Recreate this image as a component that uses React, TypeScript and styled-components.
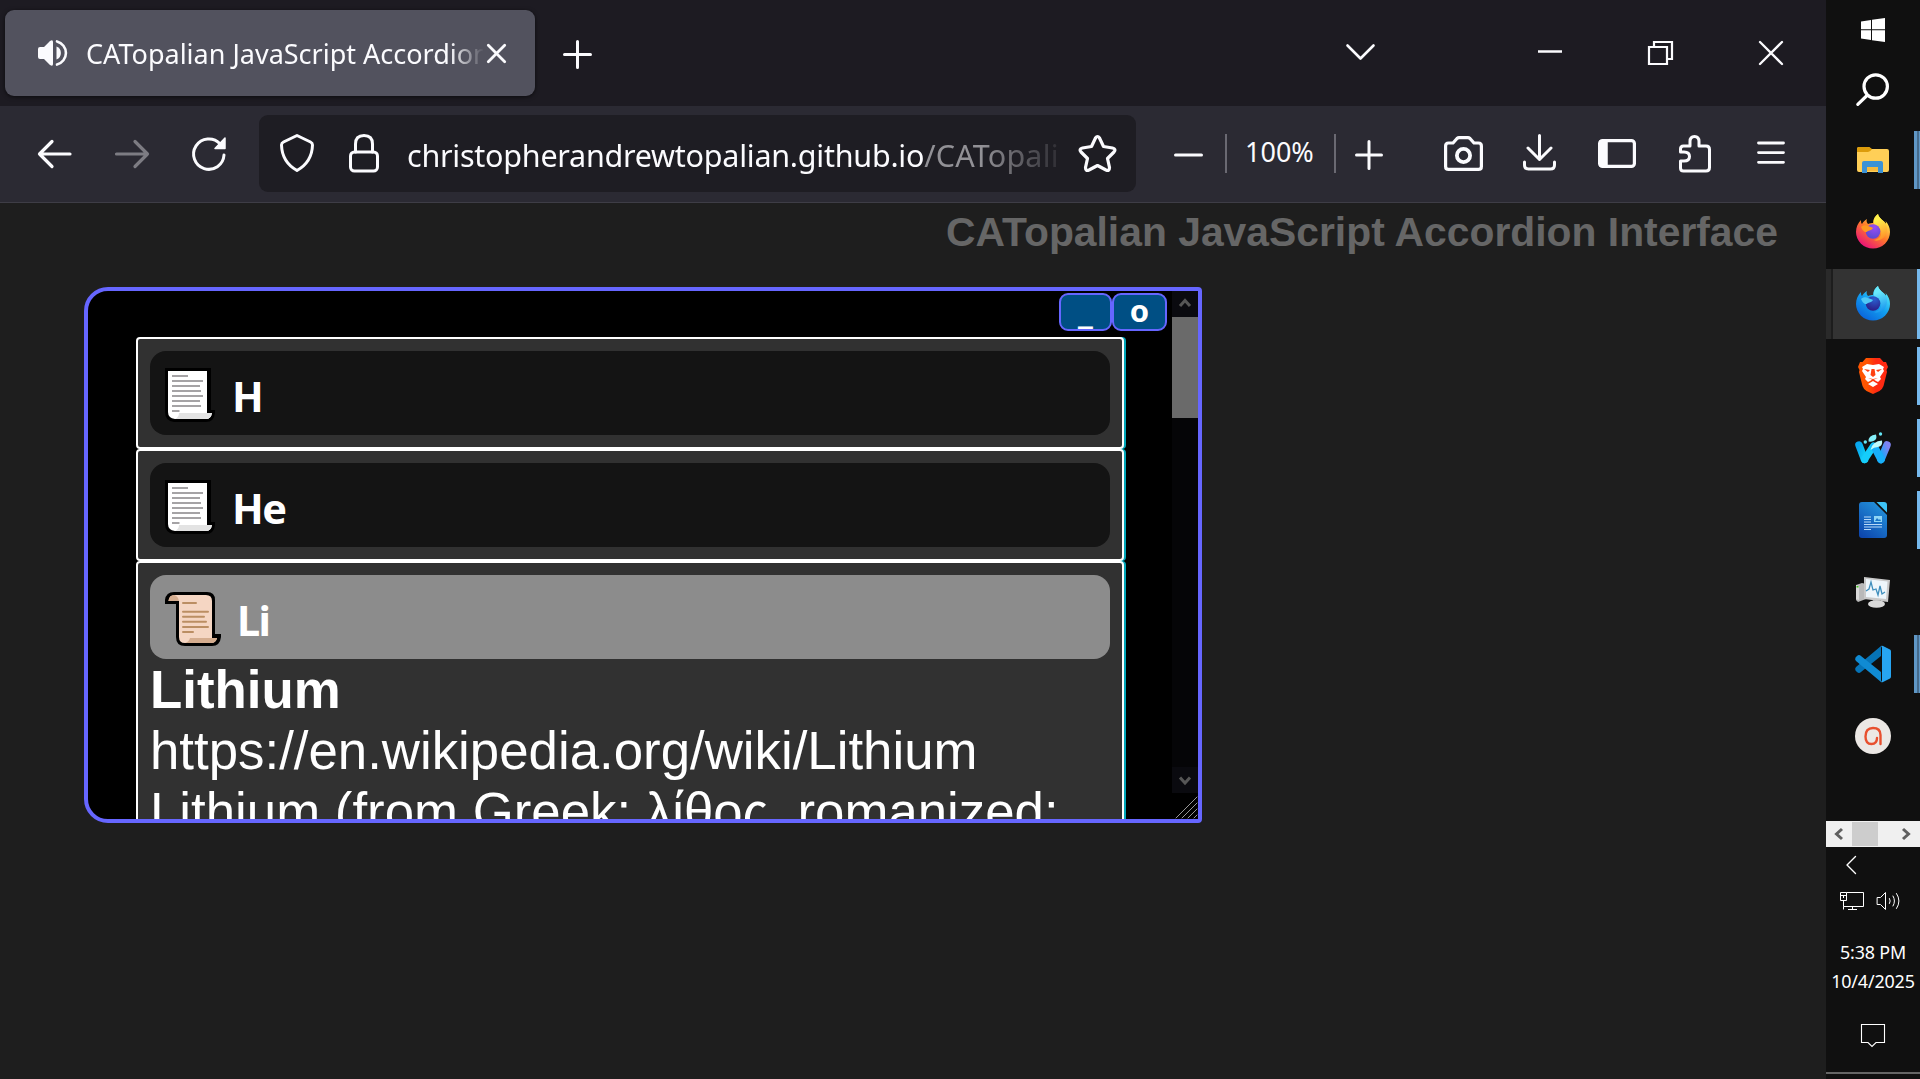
import React from "react";
import styled, { createGlobalStyle } from "styled-components";

const UI_FONT = `"Noto Sans", "Open Sans", sans-serif`;
const PAGE_FONT = `"Liberation Sans", Arial, sans-serif`;

const GlobalStyle = createGlobalStyle`
  * { box-sizing: border-box; }
  html, body { margin: 0; background: #1e1e1e; overflow: hidden; }
  svg { display: block; flex: none; overflow: visible; }
`;

const Desktop = styled.div`
  display: flex;
  width: 1920px;
  height: 1079px;
  overflow: hidden;
  background: #111;
`;

const BrowserWindow = styled.main`
  display: flex;
  flex-direction: column;
  width: 1826px;
  flex: none;
  background: #1e1e1e;
`;

const TabStrip = styled.header`
  display: flex;
  height: 106px;
  flex: none;
  padding: 10px 43px 10px 5px;
  background: #1d1b22;
  color: #fbfbfe;
`;

const Tab = styled.div`
  display: flex;
  align-items: center;
  width: 530px;
  height: 86px;
  padding-left: 33px;
  border-radius: 9px;
  background: #52525e;
  box-shadow: 0 1px 4px rgba(0, 0, 0, 0.6);
`;

const TabLabel = styled.span`
  width: 397px;
  margin-left: 19px;
  padding-top: 2px;
  overflow: hidden;
  white-space: nowrap;
  font: 400 27px/36px ${UI_FONT};
  letter-spacing: 0;
  mask-image: linear-gradient(to right, #000 364px, transparent 398px);
`;

const Slot = styled.span<{ $gap?: number; $drop?: number }>`
  display: flex;
  flex: none;
  margin-left: ${(p) => p.$gap ?? 0}px;
  margin-top: ${(p) => p.$drop ?? 0}px;
`;

const Spacer = styled.span`
  flex: 1;
`;

const Toolbar = styled.nav`
  display: flex;
  height: 97px;
  flex: none;
  padding: 9px 41px 10px 38px;
  border-bottom: 1px solid #3e3d46;
  background: #2b2a33;
  color: #fbfbfe;
`;

const AddressBar = styled.div`
  display: flex;
  width: 877px;
  height: 77px;
  margin-left: 33px;
  padding-left: 21px;
  border-radius: 9px;
  background: #1e1d23;
`;

const Address = styled.span`
  width: 657px;
  margin: 19px 0 0 28px;
  overflow: hidden;
  white-space: nowrap;
  font: 400 30.5px/42px ${UI_FONT};
  letter-spacing: -0.25px;
  mask-image: linear-gradient(to right, #000 575px, transparent 665px);
`;

const AddressPath = styled.span`
  color: #929196;
  letter-spacing: 0.2px;
`;

const Divider = styled.span<{ $gap: number }>`
  width: 2px;
  height: 39px;
  margin: 19px 0 0 ${(p) => p.$gap}px;
  background: #6a6972;
`;

const ZoomLevel = styled.span`
  width: 68px;
  margin: 19px 0 0 18px;
  white-space: nowrap;
  font: 400 27px/36px ${UI_FONT};
  letter-spacing: 0;
`;

const Page = styled.section`
  display: flex;
  flex-direction: column;
  flex: 1;
`;

const PageTitle = styled.h1`
  height: 84px;
  margin: 0;
  padding: 5px 48px 0 0;
  text-align: right;
  white-space: nowrap;
  color: #666;
  font: 700 40.85px/48px ${PAGE_FONT};
`;

const Panel = styled.div`
  display: flex;
  width: 1118px;
  height: 536px;
  margin-left: 84px;
  border: 4px solid #6666ff;
  border-radius: 24px 4px 4px 24px;
  background: #000;
  overflow: hidden;
`;

const PanelBody = styled.div`
  display: flex;
  flex-direction: column;
  width: 1084px;
  height: 528px;
  overflow: hidden;
`;

const PanelControls = styled.div`
  display: flex;
  flex: none;
  justify-content: flex-end;
  height: 46px;
  padding: 2px 5px 6px 0;
`;

const PanelButton = styled.button<{ $width: number; $size: number }>`
  width: ${(p) => p.$width}px;
  height: 38px;
  padding: 0 0 5px;
  border: 2px solid #6666ff;
  border-radius: 9px;
  background: #004f84;
  color: #fff;
  font: 700 ${(p) => p.$size}px/30px ${UI_FONT};
`;

const Accordion = styled.div`
  display: flex;
  flex-direction: column;
  flex: none;
  width: 988px;
  margin-left: 48px;
`;

const Entry = styled.article`
  padding: 12px;
  border: 2px solid #fff;
  border-radius: 4px;
  background: #313131;
  box-shadow: 2px 0 0 #00a5b8;
`;

const EntryHeader = styled.div<{ $open?: boolean }>`
  display: flex;
  height: 84px;
  padding: 17px 0 0 15px;
  border-radius: 16px;
  background: ${(p) => (p.$open ? "#8c8c8c" : "#141414")};
`;

const EntryLabel = styled.span<{ $gap: number }>`
  margin: 0 0 0 ${(p) => p.$gap}px;
  color: #fff;
  font: 700 41.5px/57px ${UI_FONT};
  letter-spacing: -1.6px;
`;

const EntryText = styled.div`
  color: #fff;
  white-space: nowrap;
  font: 400 52.8px/61px ${PAGE_FONT};
`;

const EntryTitle = styled.strong`
  display: block;
  font-weight: 700;
`;

const EntryLine = styled.span`
  display: block;
`;

const ScrollRail = styled.div`
  display: flex;
  flex-direction: column;
  width: 26px;
  background: #050507;
`;

const ScrollButton = styled.div<{ $lift?: number }>`
  display: flex;
  align-items: center;
  justify-content: center;
  height: 26px;
  padding-bottom: ${(p) => p.$lift ?? 0}px;
  background: #0a0a0f;
`;

const ScrollThumb = styled.div`
  height: 101px;
  margin-bottom: auto;
  background: #6a6a6a;
`;

const ResizeCorner = styled.div`
  height: 26px;
  background: #000;
`;

const Taskbar = styled.aside`
  display: flex;
  flex-direction: column;
  width: 94px;
  height: 1079px;
  background: #101010;
  color: #fff;
`;

const SystemButton = styled.div<{ $height: number; $top: number; $left: number }>`
  height: ${(p) => p.$height}px;
  padding: ${(p) => p.$top}px 0 0 ${(p) => p.$left}px;
`;

const AppButton = styled.div<{ $active?: boolean }>`
  display: flex;
  align-items: center;
  height: 70px;
  margin-bottom: 2px;
  padding-left: ${(p) => (p.$active ? 0 : 29)}px;
  background: ${(p) => (p.$active ? "#333" : "transparent")};
`;

const ActiveSeam = styled.span`
  align-self: stretch;
  width: 7px;
  margin-right: 22px;
  border-right: 2px solid #1d1d1d;
  background: #2a2a2a;
`;

const Indicator = styled.span<{ $full?: boolean; $stacked?: boolean }>`
  width: ${(p) => (p.$stacked ? 6 : 3)}px;
  height: ${(p) => (p.$full ? 70 : 58)}px;
  margin-left: auto;
  background: ${(p) =>
    p.$stacked
      ? "linear-gradient(to right, #5f97c6 3px, #456a8b 3px 5px, #5f97c6 5px)"
      : "#76b9ed"};
`;

const TaskScroll = styled.div`
  display: flex;
  align-items: center;
  height: 26px;
  margin-top: 48px;
  padding-left: 8px;
  background: #f0f0f0;
  color: #606060;
`;

const TaskScrollThumb = styled.span`
  width: 26px;
  height: 24px;
  margin: 0 24px 0 9px;
  background: #cdcdcd;
`;

const TrayRow = styled.div`
  display: flex;
  height: 18px;
  margin-top: 18px;
  padding-left: 14px;
  gap: 13px;
`;

const Clock = styled.div`
  display: flex;
  flex-direction: column;
  align-items: center;
  margin-top: 28px;
  white-space: nowrap;
  font: 400 17.9px/29px ${UI_FONT};
  letter-spacing: -0.15px;
`;

const TaskbarEdge = styled.div`
  height: 2px;
  margin-top: 24px;
  background: #666;
`;

type DrawProps = {
  w: number;
  h: number;
  weight?: number;
  color?: string;
  children: React.ReactNode;
};

const Draw = ({ w, h, weight = 3, color = "currentColor", children }: DrawProps) => (
  <svg
    width={w}
    height={h}
    viewBox={`0 0 ${w} ${h}`}
    fill="none"
    stroke={color}
    strokeWidth={weight}
    strokeLinecap="round"
    strokeLinejoin="round"
  >
    {children}
  </svg>
);

const SpeakerIcon = () => (
  <Draw w={29} h={26} weight={2.6}>
    <path d="M0 9q0-2 2-2h4l6-6q3-2 3 1v22q0 3-3 1l-6-6H2q-2 0-2-2z" fill="currentColor" stroke="none" />
    <path d="M19 1.4a12 12 0 0 1 0 23.2" />
    <path d="M18.5 6.5a7 7 0 0 1 0 13z" fill="currentColor" stroke="none" />
  </Draw>
);

const PageIcon = () => (
  <svg width="50" height="54" viewBox="0 0 50 54">
    <path d="M0 0H46V42H50V45Q49 54 41 54H9Q0 53 0 44Z" fill="#000" />
    <path d="M3 3H42V45H47Q46 51 41 51H10Q3 50 3 44Z" fill="#fff" />
    <path d="M14 45H47Q46 51 41 51H10Q14 49 14 45Z" fill="#e3e3e3" />
    <path
      d="M7 8H23M7 13H38M7 18H35M7 23H36M7 28H38M7 33H35M7 38H36M7 43H14.500"
      stroke="#a5a3a5"
      strokeWidth="2"
    />
  </svg>
);

const ParchmentIcon = () => (
  <svg width="56" height="54" viewBox="0 0 56 54" strokeLinecap="round">
    <path d="M0 12V8Q1 0 9 0H42Q50 0 50 8V42H56V45Q55 54 47 54H20Q11 54 11 45V12Z" fill="#000" />
    <path d="M3.500 9Q4 3 10 3H41Q47 3 47 9V46H52Q51 51 46 51H20Q14 51 14 45V9Z" fill="#f5d6c3" />
    <path d="M3.500 9Q4 3 9 3Q13 4 14 9Z" fill="#d5ad8f" />
    <path d="M25 46H52Q51 51 46 51H20Q24 50 25 46Z" fill="#d5ad8f" />
    <path
      d="M18 11H31M18 19.700H43M18 24.700H39M18 29.700H41M18 35H43M18 40H28"
      stroke="#bb8e63"
      strokeWidth="2"
    />
  </svg>
);

type FoxProps = { id: string; body: string[]; tail: string[]; globe: string[]; head: string };

const FoxIcon = ({ id, body, tail, globe, head }: FoxProps) => (
  <svg width="36" height="36" viewBox="0 1 36 36">
    <defs>
      <linearGradient id={`${id}-body`} x1="0.85" y1="0.1" x2="0.25" y2="0.95">
        <stop offset="0.1" stopColor={body[0]} />
        <stop offset="0.5" stopColor={body[1]} />
        <stop offset="1" stopColor={body[2]} />
      </linearGradient>
      <linearGradient id={`${id}-tail`} x1="0.4" y1="0" x2="0.6" y2="1">
        <stop offset="0.2" stopColor={tail[0]} />
        <stop offset="1" stopColor={tail[1]} />
      </linearGradient>
      <radialGradient id={`${id}-globe`} cx="0.6" cy="0.2" r="0.8">
        <stop offset="0" stopColor={globe[0]} />
        <stop offset="1" stopColor={globe[1]} />
      </radialGradient>
    </defs>
    <path
      d="M23 1c1 5 6 6 8 10 0-1 0-2-.5-3 3 3 4.500 7 4.500 11a17 16.500 0 0 1-34 0c0-5 2-9 5-12 0 2 0 3 1 4 1-2 3-4 5-5-1 2 0 4 1 5 2-1 4-1 5-1 0-4 2-7 5-9z"
      fill={`url(#${id}-body)`}
    />
    <path
      d="M23 1c1 5 6 6 8 10 2 5 1 12-4 15-4 2-6 2-8 1 6-1 8-5 7-9-1-3-3-4-5-5-4-3-2-9 2-12z"
      fill={`url(#${id}-tail)`}
    />
    <circle cx="18" cy="18.500" r="7.300" fill={`url(#${id}-globe)`} />
    <path d="M6 14c2-2 5-2 7-1 2 1 4 1 5 2-1 2-3 2-5 3-1 1-2 1-3 1-2-1-3-3-4-5z" fill={head} />
  </svg>
);

const ExplorerIcon = () => (
  <svg width="36" height="36" viewBox="0 1 36 36">
    <path d="M2 8q0-2 2-2h9q2 0 3 2h16q2 0 2 2v19q0 2-2 2H4q-2 0-2-2z" fill="#ffcf57" />
    <path d="M2 8q0-2 2-2h9q2 0 4 2-2 3-4 3H2z" fill="#dc9c0b" />
    <path d="M7 32V22q0-2 2-2h17q2 0 2 2v10h-5v-6H12v6z" fill="#3b92d6" />
    <path d="M12 26h11v4H12z" fill="#f5b93d" />
  </svg>
);

const BraveIcon = () => (
  <svg width="36" height="36" viewBox="0 0 36 36">
    <defs>
      <linearGradient id="brave-shield" x1="0" x2="1">
        <stop offset="0.3" stopColor="#ff5500" />
        <stop offset="0.6" stopColor="#ff2a12" />
      </linearGradient>
    </defs>
    <path d="M11 0h14l3.500 4 2.500 0 2 5-1.500 3 .5 2-3.500 14q-1 3-4 5L18 36l-6.500-3q-3-2-4-5L4 14l.5-2L3 9l2-5h2.500z" fill="url(#brave-shield)" />
    <path
      d="M12 6l6 1 6-1 5 3-1 2 1 2-4 6 1 2-3 3-2-1-3-2-3 2-2 1-3-3 1-2-4-6 1-2-1-2zM13 26l5-3 5 3-5 3z"
      fill="#fff"
    />
    <path d="M9 11l6 1-2 2zM27 11l-6 1 2 2zM16.500 11h3l1 6-2.500 2-2.500-2zM13 20l5 2 5-2-5 1z" fill="#ff4010" />
  </svg>
);

const WaterfoxIcon = () => (
  <svg width="36" height="36" viewBox="0 0 36 36" fill="none" strokeLinecap="round">
    <defs>
      <linearGradient id="wave-a" x1="0" y1="0" x2="1" y2="1">
        <stop offset="0" stopColor="#08a7ee" />
        <stop offset="1" stopColor="#12d5f7" />
      </linearGradient>
      <linearGradient id="wave-b" x1="0" y1="1" x2="1" y2="0">
        <stop offset="0.2" stopColor="#16a8fb" />
        <stop offset="1" stopColor="#7f82f0" />
      </linearGradient>
    </defs>
    <path d="M26 29.500L32 15" stroke="url(#wave-b)" strokeWidth="7.500" />
    <path d="M4 15L9.500 29.500" stroke="url(#wave-a)" strokeWidth="7.500" />
    <path d="M9.500 29.500L18.500 16" stroke="#15cdfb" strokeWidth="7" />
    <path d="M19.500 17L26 29.500" stroke="#18b0fb" strokeWidth="7.500" />
    <path d="M15.500 20q2-9 11.500-9.500 1 5.500-4 6.500-4 0-7.500 3z" fill="#c1fbfb" />
    <path d="M13.500 11.500q-.5-6 7.500-7 1.500 5-2.500 6.500-2.500 1-5 .5z" fill="#85eff8" />
    <circle cx="25.500" cy="4" r="1.700" fill="#64e5f4" />
    <circle cx="10.300" cy="12" r="1.700" fill="#64e5f4" />
  </svg>
);

const WriterIcon = () => (
  <svg width="36" height="36" viewBox="0 0 36 36">
    <defs>
      <linearGradient id="writer-page" x1="0.8" y1="0" x2="0.2" y2="1">
        <stop offset="0" stopColor="#2496dd" />
        <stop offset="1" stopColor="#0d47ae" />
      </linearGradient>
    </defs>
    <path d="M7 0h12l13 13v20q0 3-3 3H7q-3 0-3-3V3q0-3 3-3z" fill="url(#writer-page)" />
    <path d="M21.500 0h7.500q3 0 3 3v7.500z" fill="#3dc3f7" />
    <path d="M9 15h7M9 17.500h7M9 20h7M9 22.500h18M9 25h18M9 27.500h7" stroke="#b8d9f8" strokeWidth="1.200" />
    <rect x="19" y="14" width="8" height="6" fill="#8fd6f5" />
    <path d="M20 19l2-3 2 2 1-1 1 2z" fill="#1a74c8" />
  </svg>
);

const MonitorIcon = () => (
  <svg width="36" height="36" viewBox="0 -1 36 36">
    <path d="M1 10l6-2 4 1v15l-8 3-2-2z" fill="#b9b9b9" />
    <path d="M1 10l3 1v14l-3-1z" fill="#d8d8d8" />
    <rect x="1.500" y="11" width="2" height="1.500" fill="#3fc21e" />
    <path d="M9 2l26 3-2 22-24-3z" fill="#c9c9c9" />
    <path d="M11 4l21.500 2.500-1.500 17.500-20-2z" fill="#eef6fb" />
    <path d="M11 16l3-2 2-7 2 8 3-1 2 6 2-9 2 8 3-2" fill="none" stroke="#3f8fbd" strokeWidth="1.300" />
    <path d="M18 25h8v3h-8z" fill="#999" />
    <ellipse cx="21.500" cy="29" rx="8.500" ry="3.800" fill="#dadada" />
  </svg>
);

const CodeIcon = () => (
  <svg width="36" height="36" viewBox="0 0 36 36">
    <path d="M27 9.500v17L16.500 18z" fill="#101010" />
    <path d="M26 0v10L6 26q-2 2-4 0l-1.500-1.500q-1-2 .5-3.500z" fill="#0673b6" />
    <path d="M26 36V26L6 10q-2-2-4 0L.5 11.500q-1 2 .5 3.500z" fill="#108bd3" />
    <path d="M26 0q1-.5 2 0l7 3.500q1 .5 1 2v25q0 1.500-1 2L28 36q-1 .5-2 0 1-1 1-2V2q0-1-1-2z" fill="#27a5f2" />
  </svg>
);

const AppLetterIcon = () => (
  <svg width="36" height="36" viewBox="0 0 36 36">
    <circle cx="18" cy="18" r="18" fill="#ece8e5" />
    <path
      d="M25.500 26V17Q25.500 10 18 10Q10.500 10 10.500 18.500Q10.500 26 16.500 26Q22 26 22 20"
      fill="none"
      stroke="#e8502f"
      strokeWidth="2.400"
      strokeLinecap="round"
    />
  </svg>
);

const FIREFOX: FoxProps = {
  id: "fox",
  body: ["#ffe14a", "#ff7a2a", "#ea1477"],
  tail: ["#fff04a", "#ff8a25"],
  globe: ["#9a4df5", "#5a4ad0"],
  head: "#ff9820",
};

const FIREFOX_DEV: FoxProps = {
  id: "devfox",
  body: ["#4ce0f8", "#12a0f0", "#0a66dc"],
  tail: ["#69e9fb", "#1492ee"],
  globe: ["#2a5fd0", "#2a1e88"],
  head: "#4fc8f6",
};

const APPS: { icon: React.ReactNode; state?: "open" | "stacked" | "active" }[] = [
  { icon: <ExplorerIcon />, state: "stacked" },
  { icon: <FoxIcon {...FIREFOX} /> },
  { icon: <FoxIcon {...FIREFOX_DEV} />, state: "active" },
  { icon: <BraveIcon />, state: "open" },
  { icon: <WaterfoxIcon />, state: "open" },
  { icon: <WriterIcon />, state: "open" },
  { icon: <MonitorIcon /> },
  { icon: <CodeIcon />, state: "stacked" },
  { icon: <AppLetterIcon /> },
];

const Tabs = () => (
  <TabStrip>
    <Tab>
      <Slot>
        <SpeakerIcon />
      </Slot>
      <TabLabel>CATopalian JavaScript Accordion</TabLabel>
      <Slot $gap={4}>
        <Draw w={19} h={19} weight={2.8}>
          <path d="M1.300 1.300L17.700 17.700M17.700 1.300L1.300 17.700" />
        </Draw>
      </Slot>
    </Tab>
    <Slot $gap={28} $drop={30}>
      <Draw w={29} h={29}>
        <path d="M1.500 14.500H27.500M14.500 1.500V27.500" />
      </Draw>
    </Slot>
    <Spacer />
    <Slot $drop={34}>
      <Draw w={29} h={17} weight={2.6}>
        <path d="M1.500 1.500L14.500 14.500L27.500 1.500" />
      </Draw>
    </Slot>
    <Slot $gap={163} $drop={40}>
      <Draw w={24} h={3} weight={2.5}>
        <path d="M0 1.500H24" strokeLinecap="butt" />
      </Draw>
    </Slot>
    <Slot $gap={86} $drop={31}>
      <Draw w={25} h={24} weight={2.2}>
        <path d="M1 6H19V23H1ZM6 6V1H24V18H19" strokeLinejoin="miter" />
      </Draw>
    </Slot>
    <Slot $gap={86} $drop={31}>
      <Draw w={24} h={24} weight={2.3}>
        <path d="M1 1L23 23M23 1L1 23" />
      </Draw>
    </Slot>
  </TabStrip>
);

const Navigation = () => (
  <Toolbar>
    <Slot $drop={25}>
      <Draw w={34} h={28} weight={3.2}>
        <path d="M32 14H1.500M14 1.500L1.500 14L14 26.500" />
      </Draw>
    </Slot>
    <Slot $gap={43} $drop={25}>
      <Draw w={34} h={28} weight={3.2} color="#7d7c83">
        <path d="M1.500 14H32.500M20 1.500L32.500 14L20 26.500" />
      </Draw>
    </Slot>
    <Slot $gap={43} $drop={22}>
      <Draw w={34} h={34} weight={3}>
        <path d="M32 18A15.200 15.200 0 1 1 28 6.800" />
        <path d="M33 1V11.500H23Z" fill="currentColor" strokeWidth="1.500" />
      </Draw>
    </Slot>
    <AddressBar>
      <Slot $drop={19}>
        <Draw w={34} h={38} weight={3}>
          <path d="M17 1.500L30.500 8Q32.500 9 32.500 11Q32 28 17 36.500Q2 28 1.500 11Q1.500 9 3.500 8Z" />
        </Draw>
      </Slot>
      <Slot $gap={35} $drop={19}>
        <Draw w={30} h={39} weight={3}>
          <rect x="1.500" y="18" width="27" height="19" rx="4" />
          <path d="M6.500 18V10Q6.500 1.500 15 1.500Q23.500 1.500 23.500 10V18" />
        </Draw>
      </Slot>
      <Address>
        christopherandrewtopalian.github.io<AddressPath>/CATopali</AddressPath>
      </Address>
      <Slot $gap={14} $drop={20}>
        <Draw w={39} h={37} weight={3.2}>
          <path d="M17.500 3Q19.500 0 21.500 3L25.500 11.500L34.500 13Q38.500 14 36 17L29.500 23.500L31.500 32.500Q31.500 36.500 28 35L19.500 30.500L11 35Q7.500 36.500 7.500 32.500L9.500 23.500L3 17Q.5 14 4.500 13L13.500 11.500Z" />
        </Draw>
      </Slot>
    </AddressBar>
    <Slot $gap={38} $drop={38}>
      <Draw w={29} h={4} weight={3}>
        <path d="M1.500 2H27.500" />
      </Draw>
    </Slot>
    <Divider $gap={22} />
    <ZoomLevel>100%</ZoomLevel>
    <Divider $gap={21} />
    <Slot $gap={19} $drop={25}>
      <Draw w={28} h={30} weight={3}>
        <path d="M1.500 15H26.500M14 1.500V28.500" />
      </Draw>
    </Slot>
    <Spacer />
    <Slot $drop={21}>
      <Draw w={39} h={35} weight={3.200}>
        <path d="M1.600 10Q1.600 7 4.600 7H9L13 2.500Q14 1.600 15 1.600H24Q25 1.600 26 2.500L30 7H34.400Q37.400 7 37.400 10V30.400Q37.400 33.400 34.400 33.400H4.600Q1.600 33.400 1.600 30.400Z" />
        <circle cx="19.500" cy="19.500" r="6.600" strokeWidth="3.800" />
      </Draw>
    </Slot>
    <Slot $gap={40} $drop={19}>
      <Draw w={33} h={37} weight={3}>
        <path d="M16.500 1.500V25M5 14L16.500 25.500L28 14M1.500 28V31Q1.500 35 5.500 35H27.500Q31.500 35 31.500 31V28" />
      </Draw>
    </Slot>
    <Slot $gap={42} $drop={24}>
      <Draw w={38} h={29} weight={3.200}>
        <rect x="1.600" y="1.600" width="34.800" height="25.800" rx="3" />
        <path d="M2 2H9V27H2Z" fill="currentColor" strokeWidth="1.500" />
      </Draw>
    </Slot>
    <Slot $gap={43} $drop={20}>
      <Draw w={32} h={38} weight={3}>
        <path d="M4.500 11H11V6.500Q11 1.500 15.500 1.500Q20 1.500 20 6.500V11H27Q30.500 11 30.500 14.500V32.500Q30.500 36 27 36H4.500Q1.500 36 1.500 33V26H5Q10.500 26 10.500 21.500Q10.500 17 5 17H1.500V14Q1.500 11 4.500 11Z" />
      </Draw>
    </Slot>
    <Slot $gap={46} $drop={26}>
      <Draw w={28} h={24} weight={2.8}>
        <path d="M1.500 2H26.500M1.500 11.600H26.500M1.500 21.300H26.500" />
      </Draw>
    </Slot>
  </Toolbar>
);

const AccordionPanel = () => (
  <Panel>
    <PanelBody>
      <PanelControls>
        <PanelButton $width={53} $size={36}>_</PanelButton>
        <PanelButton $width={55} $size={31}>o</PanelButton>
      </PanelControls>
      <Accordion>
        <Entry>
          <EntryHeader>
            <PageIcon />
            <EntryLabel $gap={17}>H</EntryLabel>
          </EntryHeader>
        </Entry>
        <Entry>
          <EntryHeader>
            <PageIcon />
            <EntryLabel $gap={17}>He</EntryLabel>
          </EntryHeader>
        </Entry>
        <Entry>
          <EntryHeader $open>
            <ParchmentIcon />
            <EntryLabel $gap={16}>Li</EntryLabel>
          </EntryHeader>
          <EntryText>
            <EntryTitle>Lithium</EntryTitle>
            <EntryLine>https://en.wikipedia.org/wiki/Lithium</EntryLine>
            <EntryLine>Lithium (from Greek: λίθος, romanized:</EntryLine>
          </EntryText>
        </Entry>
      </Accordion>
    </PanelBody>
    <ScrollRail>
      <ScrollButton $lift={3}>
        <Draw w={12} h={9} weight={3} color="#565656">
          <path d="M1 8L6 2.500L11 8" strokeLinecap="butt" strokeLinejoin="miter" />
        </Draw>
      </ScrollButton>
      <ScrollThumb />
      <ScrollButton>
        <Draw w={12} h={9} weight={3} color="#565656">
          <path d="M1 1.500L6 7L11 1.500" strokeLinecap="butt" strokeLinejoin="miter" />
        </Draw>
      </ScrollButton>
      <ResizeCorner>
        <Draw w={26} h={26} weight={1} color="#999">
          <path d="M4 25L25 4M10 25L25 10M16 25L25 16M22 25L25 22" />
        </Draw>
      </ResizeCorner>
    </ScrollRail>
  </Panel>
);

const WindowsTaskbar = () => (
  <Taskbar>
    <SystemButton $height={55} $top={18} $left={35}>
      <svg width="24" height="24" viewBox="0 0 24 24" fill="#fff">
        <path d="M0 3.400L10 2V11.300H0ZM11 1.800L24 0V11.300H11ZM0 12.300H10V22L0 20.600ZM11 12.300H24V24L11 22.200Z" />
      </svg>
    </SystemButton>
    <SystemButton $height={70} $top={18} $left={30}>
      <Draw w={33} h={33} weight={3.200}>
        <circle cx="19.700" cy="13.500" r="11.700" />
        <path d="M11 22.500L1.800 31.300" />
      </Draw>
    </SystemButton>
    {APPS.map(({ icon, state }, i) => (
      <AppButton key={i} $active={state === "active"}>
        {state === "active" && <ActiveSeam />}
        {icon}
        {state && <Indicator $full={state === "active"} $stacked={state === "stacked"} />}
      </AppButton>
    ))}
    <TaskScroll>
      <Draw w={9} h={12} weight={3}>
        <path d="M8 1L2.500 6L8 11" strokeLinecap="butt" strokeLinejoin="miter" />
      </Draw>
      <TaskScrollThumb />
      <Draw w={9} h={12} weight={3}>
        <path d="M1 1L6.500 6L1 11" strokeLinecap="butt" strokeLinejoin="miter" />
      </Draw>
    </TaskScroll>
    <SystemButton $height={27} $top={9} $left={20}>
      <Draw w={10} h={18} weight={1.400}>
        <path d="M9.500.5L1 9L9.500 17.500" />
      </Draw>
    </SystemButton>
    <TrayRow>
      <Draw w={24} h={18} weight={1}>
        <path
          d="M6.500.5H23.500V14.500H3.500V8.500M3.500 14.500V17.500M8 17.500H17M12.500 14.500V17.500M.5.500H6.500V8.500H.5ZM.5 3.500H6.500M3.500 3.500V6"
          strokeLinecap="butt"
          strokeLinejoin="miter"
        />
      </Draw>
      <Draw w={23} h={18} weight={1}>
        <path d="M.5 5.500H3.500L8.500.5V17.500L3.500 12.500H.5Z" strokeLinejoin="miter" />
        <path d="M12.500 6.500Q14 9 12.500 11.500M16 4Q19 9 16 14M19.500 1.500Q24.500 9 19.500 16.500" />
      </Draw>
    </TrayRow>
    <Clock>
      <span>5:38 PM</span>
      <span>10/4/2025</span>
    </Clock>
    <SystemButton $height={52} $top={28} $left={35}>
      <Draw w={24} h={24} weight={1.100}>
        <path d="M.5.500H23.500V18.500H15L11 22.500L7 18.500H.5Z" strokeLinejoin="miter" />
      </Draw>
    </SystemButton>
    <TaskbarEdge />
  </Taskbar>
);

export default function App() {
  return (
    <>
      <GlobalStyle />
      <Desktop>
        <BrowserWindow>
          <Tabs />
          <Navigation />
          <Page>
            <PageTitle>CATopalian JavaScript Accordion Interface</PageTitle>
            <AccordionPanel />
          </Page>
        </BrowserWindow>
        <WindowsTaskbar />
      </Desktop>
    </>
  );
}
